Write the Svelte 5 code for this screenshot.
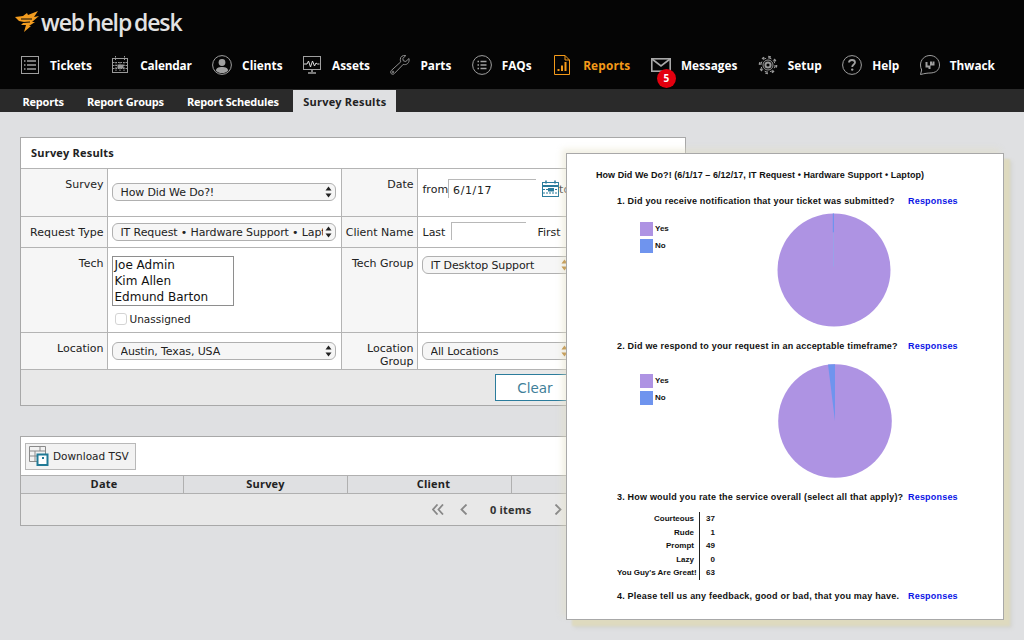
<script lang="ts">
  const subnav = ['Reports', 'Report Groups', 'Report Schedules', 'Survey Results'];
  const ratings = [
    { label: 'Courteous', value: 37 },
    { label: 'Rude', value: 1 },
    { label: 'Prompt', value: 49 },
    { label: 'Lazy', value: 0 },
    { label: "You Guy's Are Great!", value: 63 }
  ];
  const columns = ['Date', 'Survey', 'Client', ''];
</script>

{#snippet arrows(color = '#222')}
  <svg class="arrows" width="7" height="12" viewBox="0 0 7 12">
    <path d="M3.5 0.5 L6.5 4.5 H0.5 Z M3.5 11.5 L0.5 7.5 H6.5 Z" fill={color} />
  </svg>
{/snippet}

{#snippet legend()}
  <div class="legend">
    <div class="key"><i class="swatch yes"></i>Yes</div>
    <div class="key"><i class="swatch no"></i>No</div>
  </div>
{/snippet}

<header class="top">
  <div class="brand">
    <svg width="25" height="22" viewBox="0 0 25 22">
      <path d="M0 6 L8 5 L12 2 L13 4 L23 0 L19 6 L24 5 L17 11 L20 11 L14 15 L16 15 L9 21 L11 14 L6 14 L9 11 L4 10 Z" fill="#f39c1f" />
      <path d="M6 8 L17 8 M8 11.5 L15 11" stroke="#0a0a0a" stroke-width="1" />
    </svg>
    <span class="wordmark">web help desk</span>
  </div>
  <nav class="main">
    <a href="#t" class="item wide-gap">
      <svg width="18" height="18" viewBox="0 0 18 18" fill="none" stroke="#a0a0a0"><rect x="0.5" y="0.5" width="17" height="17" /><path d="M3 5h1.5M6 5h9M3 9h1.5M6 9h9M3 13h1.5M6 13h9" stroke-width="1.6" /></svg>
      Tickets
    </a>
    <a href="#c" class="item cal">
      <svg width="16" height="17" viewBox="0 0 16 17" fill="none" stroke="#999"><rect x="0.5" y="2.5" width="15" height="14" /><path d="M3.5 0v4M12.5 0v4M1 6.5h14M1 9.5h14M1 12.5h14M4 6v10M8 6v10M12 6v10" stroke-dasharray="1.5 1" /><rect x="6" y="9" width="5" height="3" fill="#999" /></svg>
      Calendar
    </a>
    <a href="#l" class="item">
      <svg width="20" height="20" viewBox="0 0 20 20" fill="none" stroke="#a0a0a0"><circle cx="10" cy="10" r="9.4" /><circle cx="10" cy="7.5" r="3.4" fill="#a0a0a0" stroke="none" /><path d="M3.8 15.5 C4.5 12.5 7 12 10 12 C13 12 15.5 12.5 16.2 15.5 C14.5 17.5 12.5 18 10 18 C7.5 18 5.5 17.5 3.8 15.5Z" fill="#a0a0a0" stroke="none" /></svg>
      Clients
    </a>
    <a href="#a" class="item wide-gap">
      <svg width="18" height="18" viewBox="0 0 18 18" fill="none" stroke="#a0a0a0"><rect x="0.5" y="0.5" width="17" height="13" /><path d="M1 8h3l1.5-3 2 6 2-6 2 5 1.5-3 1.5 1h2" stroke="#ddd" /><path d="M9 14v2M5 17h8" stroke-width="1.6" /></svg>
      Assets
    </a>
    <a href="#p" class="item">
      <svg width="20" height="20" viewBox="0 0 20 20" fill="none" stroke="#8f8f8f"><path d="M19 3.5 L15.8 6.5 L13.3 5.8 L12.8 3.4 L15.8 0.6 C12.8 0 10.3 1.5 10.3 4.5 C10.3 5.5 10.5 6.2 10.8 6.8 L1.3 15.5 C0.3 16.5 0.5 17.8 1.2 18.6 C2 19.4 3.3 19.6 4.3 18.6 L13.2 9.4 C16.5 10.4 19.8 8 19 3.5Z" /><circle cx="2.9" cy="17" r="0.9" /></svg>
      Parts
    </a>
    <a href="#f" class="item">
      <svg width="20" height="20" viewBox="0 0 20 20" fill="none" stroke="#a0a0a0"><circle cx="10" cy="10" r="9.4" /><path d="M5.5 6.5h1.5M8.5 6.5h6M5.5 10h1.5M8.5 10h6M5.5 13.5h1.5M8.5 13.5h6" stroke-width="1.7" /></svg>
      FAQs
    </a>
    <a href="#r" class="item current">
      <svg width="16" height="20" viewBox="0 0 16 20" fill="none" stroke="#f49a1a"><path d="M0.5 0.5 H11 L15.5 5 V19.5 H0.5 Z" /><path d="M11 0.5 V5 H15.5" /><path d="M4.5 16V14M8 16V10.5M11.5 16V7" stroke-width="2" /></svg>
      Reports
    </a>
    <a href="#m" class="item msg">
      <svg width="20" height="14" viewBox="0 0 20 14" fill="none" stroke="#a8a8a8" stroke-width="1.6"><rect x="0.8" y="0.8" width="18.4" height="12.4" /><path d="M1 1 L10 8 L19 1" /></svg>
      Messages
      <span class="badge">5</span>
    </a>
    <a href="#s" class="item">
      <svg width="20" height="20" viewBox="0 0 20 20" fill="none" stroke="#9a9a9a"><circle cx="10" cy="10" r="7" stroke-width="1" stroke-dasharray="3.4 2.1" /><circle cx="10" cy="10" r="8.4" stroke-width="1.8" stroke-dasharray="2.6 3.99" /><circle cx="10" cy="10" r="5" /><circle cx="10" cy="10" r="2.6" stroke-width="2" /></svg>
      Setup
    </a>
    <a href="#h" class="item">
      <svg width="20" height="20" viewBox="0 0 20 20" fill="none" stroke="#a0a0a0"><circle cx="10" cy="10" r="9.4" /><path d="M7 7.6 C7 5.8 8.4 5 10 5 C11.7 5 13 6 13 7.5 C13 9.5 10.2 9.5 10.2 12" stroke-width="1.8" /><circle cx="10.2" cy="14.6" r="1.2" fill="#a0a0a0" stroke="none" /></svg>
      Help
    </a>
    <a href="#w" class="item">
      <svg width="20" height="20" viewBox="0 0 20 20" fill="none" stroke="#a0a0a0"><path d="M1.7 15 C0.9 13.6 0.5 11.8 0.5 10 C0.5 4.7 4.7 0.5 10 0.5 C15.3 0.5 19.5 4.7 19.5 10 C19.5 15.3 15.3 18 10 18 C7.6 18 5 18.4 0.5 19.5 Z" /><path d="M6.5 7v4.5h3v2.5M11 6.5v3h2.5v-3" stroke-width="2" /></svg>
      Thwack
    </a>
  </nav>
  <nav class="sub">
    {#each subnav as tab, i}
      <a href="#x" class:active={i === subnav.length - 1}>{tab}</a>
    {/each}
  </nav>
</header>

<main class="content">
  <section class="panel form">
    <h2>Survey Results</h2>
    <table>
      <colgroup>
        <col class="c1" /><col class="c2" /><col class="c3" /><col />
      </colgroup>
      <tbody>
        <tr class="r1">
          <th>Survey</th>
          <td>
            <div class="select"><select><option>How Did We Do?!</option></select>{@render arrows()}</div>
          </td>
          <th>Date</th>
          <td>
            <div class="dates">
              <span>from</span><input class="date" value="6/1/17" />
              <svg width="17" height="17" viewBox="0 0 17 17" fill="none" stroke="#2b7c9c"><rect x="0.5" y="2.5" width="16" height="14" /><path d="M4 0.5v3M13 0.5v3" stroke-width="1.5" /><path d="M1 6h15" stroke-width="2" /><path d="M1 9.5h15M1 13h15" stroke-dasharray="2 1" /><rect x="6" y="8" width="6" height="3.5" fill="#2b7c9c" stroke="none" /></svg>
              <span class="to">to</span>
            </div>
          </td>
        </tr>
        <tr class="r2">
          <th>Request Type</th>
          <td>
            <div class="select"><select><option>IT Request • Hardware Support • Laptop</option></select>{@render arrows()}</div>
          </td>
          <th>Client Name</th>
          <td>
            <div class="names">
              <span>Last</span><input class="name" />
              <span>First</span>
            </div>
          </td>
        </tr>
        <tr class="r3">
          <th>Tech</th>
          <td>
            <div class="techs">
              <div>Joe Admin</div>
              <div>Kim Allen</div>
              <div>Edmund Barton</div>
            </div>
            <label class="check"><input type="checkbox" />Unassigned</label>
          </td>
          <th>Tech Group</th>
          <td>
            <div class="select wide"><select><option>IT Desktop Support</option></select>{@render arrows('#b8802a')}</div>
          </td>
        </tr>
        <tr class="r4">
          <th>Location</th>
          <td>
            <div class="select"><select><option>Austin, Texas, USA</option></select>{@render arrows()}</div>
          </td>
          <th>Location Group</th>
          <td>
            <div class="select wide"><select><option>All Locations</option></select>{@render arrows('#b8802a')}</div>
          </td>
        </tr>
      </tbody>
    </table>
    <div class="actions">
      <button type="button" class="clear">Clear</button>
    </div>
  </section>

  <section class="panel results">
    <div class="toolbar">
      <button type="button" class="download">
        <svg width="20" height="20" viewBox="0 0 20 20" fill="none">
          <path d="M0.5 0.5H16.5V15.5H0.5ZM0.5 5H16.5M0.5 10H16.5M6 5V15.5M11 0.5V5" stroke="#8a8a8a" />
          <rect x="8.5" y="8.5" width="10" height="10.5" fill="#fff" stroke="#217a96" stroke-width="2" />
          <rect x="13" y="11" width="2" height="2" fill="#217a96" />
        </svg>
        Download TSV
      </button>
    </div>
    <div class="head">
      {#each columns as col}
        <div>{col}</div>
      {/each}
    </div>
    <div class="pager">
      <svg width="12" height="11" viewBox="0 0 12 11" fill="none" stroke="#888" stroke-width="1.8"><path d="M5.5 0.5 L1 5.5 L5.5 10.5M11 0.5 L6.5 5.5 L11 10.5" /></svg>
      <svg class="prev" width="8" height="11" viewBox="0 0 8 11" fill="none" stroke="#888" stroke-width="1.8"><path d="M6.5 0.5 L1.5 5.5 L6.5 10.5" /></svg>
      <span>0 items</span>
      <svg class="next" width="8" height="11" viewBox="0 0 8 11" fill="none" stroke="#888" stroke-width="1.8"><path d="M1.5 0.5 L6.5 5.5 L1.5 10.5" /></svg>
    </div>
  </section>
</main>

<aside class="report">
  <h3>How Did We Do?! (6/1/17 – 6/12/17, IT Request • Hardware Support • Laptop)</h3>

  <div class="question q1">
    <span class="ask">1. Did you receive notification that your ticket was submitted?</span>
    <a href="#q1">Responses</a>
  </div>
  <div class="chart c-one">
    {@render legend()}
    <svg class="pie" width="114" height="114" viewBox="0 0 114 114">
      <circle cx="57" cy="57" r="56.5" fill="#ae93e3" />
      <path d="M55.8 0.5h1.2v19h-1.2z" fill="#6f94ee" />
      <path d="M56.1 19.5h0.9v34h-0.9z" fill="#98a4e8" />
    </svg>
  </div>

  <div class="question q2">
    <span class="ask">2. Did we respond to your request in an acceptable timeframe?</span>
    <a href="#q2">Responses</a>
  </div>
  <div class="chart c-two">
    {@render legend()}
    <svg class="pie" width="114" height="114" viewBox="0 0 114 114">
      <circle cx="57" cy="57" r="56.8" fill="#ae93e3" />
      <path d="M57 57 L50 0.6 A57 57 0 0 1 57 0.2 Z" fill="#6f94ee" />
    </svg>
  </div>

  <div class="question q3">
    <span class="ask">3. How would you rate the service overall (select all that apply)?</span>
    <a href="#q3">Responses</a>
  </div>
  <div class="ratings">
    {#each ratings as row}
      <div class="rating-label">{row.label}</div>
      <div class="rating-value">{row.value}</div>
    {/each}
  </div>

  <div class="question q4">
    <span class="ask">4. Please tell us any feedback, good or bad, that you may have.</span>
    <a href="#q4">Responses</a>
  </div>
</aside>

<style>
  :global(body) {
    margin: 0;
    background: #dfe0e2;
    font-family: "DejaVu Sans", sans-serif;
    overflow: hidden;
  }

  .top {
    background: #050505;
  }

  .brand {
    height: 45px;
    padding-left: 15px;
    display: flex;
    align-items: center;
    gap: 1px;
    box-sizing: border-box;
  }

  .brand svg {
    margin-top: -1px;
  }

  .wordmark {
    color: #e2e2e2;
    font-family: "Open Sans", sans-serif;
    font-size: 23px;
    font-weight: 600;
    letter-spacing: -1.1px;
    word-spacing: -2px;
    margin-top: -2px;
  }

  .main {
    height: 44px;
    padding: 0 0 5px 21px;
    display: flex;
    align-items: center;
    gap: 20.5px;
    box-sizing: border-box;
  }

  .item {
    position: relative;
    display: flex;
    align-items: center;
    gap: 10px;
    color: #fff;
    font-family: "Open Sans", sans-serif;
    font-size: 11.8px;
    font-weight: 700;
    text-decoration: none;
    white-space: nowrap;
  }

  .item.wide-gap {
    gap: 11px;
  }

  .item.cal {
    gap: 12px;
    letter-spacing: -0.2px;
  }

  .item.current {
    color: #f49a1a;
    gap: 13px;
    margin-left: 2px;
    letter-spacing: 0.2px;
  }

  .badge {
    position: absolute;
    left: 6px;
    top: 12px;
    width: 19px;
    height: 19px;
    border-radius: 50%;
    background: #e3000f;
    color: #fff;
    font-size: 10px;
    line-height: 19px;
    text-align: center;
  }

  .sub {
    height: 23px;
    background: #2a2a2a;
    display: flex;
    align-items: flex-end;
    padding-left: 11px;
  }

  .sub a {
    height: 22px;
    line-height: 24px;
    padding: 0 11.5px;
    color: #fff;
    font-family: "Open Sans", sans-serif;
    font-size: 11px;
    font-weight: 700;
    letter-spacing: -0.2px;
    text-decoration: none;
  }

  .sub a.active {
    background: #dfe0e2;
    color: #222;
    letter-spacing: 0.2px;
    padding: 0 10px;
    margin-left: 3px;
  }

  .content {
    padding: 25px 0 0 20px;
    width: 666px;
  }

  .panel {
    border: 1px solid #a8a8a8;
    background: #fff;
  }

  h2 {
    margin: 0;
    height: 30px;
    padding-left: 10px;
    font-family: "Open Sans", sans-serif;
    font-size: 11px;
    line-height: 30px;
    color: #222;
    letter-spacing: 0.2px;
  }

  table {
    width: 100%;
    table-layout: fixed;
    border-collapse: collapse;
    font-size: 11px;
    color: #222;
  }

  .c1 { width: 86px; }
  .c2 { width: 234px; }
  .c3 { width: 76px; }

  th, td {
    border: 1px solid #b4b4b4;
    vertical-align: top;
    padding: 0;
  }

  tr > :first-child { border-left: 0; }
  tr > :last-child { border-right: 0; }

  th {
    background: #f6f6f6;
    font-weight: 400;
    text-align: right;
    padding: 9px 3px 0 0;
    line-height: 13px;
  }

  td {
    padding: 9px 4px 0 4px;
    white-space: nowrap;
  }

  .r1 { height: 48px; }
  .r2 { height: 31px; }
  .r3 { height: 85px; }
  .r4 { height: 37px; }

  .r2 td { padding-top: 5px; }
  .r1 td { padding-top: 14px; }
  .r3 td { padding-top: 8px; }

  .r2 .select {
    margin-top: 1px;
  }

  .select {
    position: relative;
    width: 224px;
    height: 18px;
  }

  .select.wide {
    width: 260px;
  }

  .select select {
    width: 100%;
    height: 18px;
    appearance: none;
    border: 1px solid #b0b0b0;
    border-radius: 6px;
    background: #f6f6f6;
    padding: 0 12px 0 8px;
    font: 11px "DejaVu Sans", sans-serif;
    letter-spacing: -0.12px;
    color: #222;
    box-sizing: border-box;
    outline: none;
  }

  .arrows {
    position: absolute;
    right: 4px;
    top: 3px;
  }

  .select.wide .arrows {
    right: 114px;
  }

  .dates, .names {
    display: flex;
    align-items: flex-start;
    margin-left: 1px;
  }

  .dates {
    margin-top: -4px;
  }

  .dates span {
    line-height: 14px;
    margin-top: 4px;
  }

  .date, .name {
    border: 0;
    border-top: 1px solid #b8b8b8;
    border-left: 1px solid #b8b8b8;
    background: transparent;
    padding: 2px 0 0 4px;
    font: 11px "DejaVu Sans", sans-serif;
    letter-spacing: 0.6px;
    color: #222;
    box-sizing: border-box;
    outline: none;
  }

  .date {
    width: 88px;
    height: 19px;
    margin: 0 6px 0 0;
  }

  .dates svg {
    flex: none;
    margin-top: 1px;
  }

  .to {
    color: #444;
  }

  .names span {
    margin-top: 4px;
    line-height: 14px;
  }

  .name {
    width: 75px;
    height: 18px;
    margin: 0 11px 0 6px;
  }

  .techs {
    width: 122px;
    height: 50px;
    border: 1px solid #8e8e8e;
    padding: 0 0 0 2px;
    box-sizing: border-box;
    font-size: 12px;
    line-height: 16px;
    color: #111;
    background: #fff;
  }

  .check {
    display: flex;
    align-items: center;
    gap: 3px;
    margin: 6px 0 0 3px;
    font-size: 10.5px;
    line-height: 14px;
  }

  .check input {
    appearance: none;
    width: 12px;
    height: 12px;
    margin: 0;
    border: 1px solid #d4d4d4;
    border-radius: 3px;
    background: #fff;
  }

  .actions {
    height: 35px;
    background: #e8e8e8;
    display: flex;
    justify-content: flex-end;
    align-items: center;
    padding-right: 110px;
  }

  .clear {
    width: 80px;
    height: 27px;
    border: 1px solid #2b7c9c;
    background: #fff;
    color: #3f7f99;
    font: 13.5px "DejaVu Sans", sans-serif;
    padding: 0;
  }

  .results {
    margin-top: 30px;
  }

  .toolbar {
    height: 38px;
    display: flex;
    align-items: center;
    padding-left: 4px;
  }

  .download {
    width: 111px;
    height: 27px;
    display: flex;
    align-items: center;
    gap: 4px;
    padding: 0 0 0 3px;
    border: 1px solid #b8b8b8;
    background: #f2f2f2;
    font: 10.5px "DejaVu Sans", sans-serif;
    color: #222;
    box-sizing: border-box;
  }

  .head {
    display: grid;
    grid-template-columns: 163px 164px 164px 1fr;
    height: 17px;
    background: #dfe0e2;
    border-top: 1px solid #b0b0b0;
    border-bottom: 1px solid #b0b0b0;
    font-family: "Open Sans", sans-serif;
    font-size: 11px;
    font-weight: 700;
    letter-spacing: 0.2px;
    line-height: 16px;
    color: #222;
    text-align: center;
  }

  .head div {
    border-right: 1px solid #b0b0b0;
  }

  .head div:nth-child(1) { padding-left: 4px; }
  .head div:nth-child(3) { padding-left: 8px; }

  .pager {
    height: 31px;
    background: #e8e8e8;
    display: flex;
    align-items: center;
    padding-left: 411px;
    color: #333;
  }

  .prev {
    margin-left: 16px;
  }

  .pager span {
    margin-left: 22px;
    width: 42px;
    font-family: "Open Sans", sans-serif;
    font-size: 11px;
    font-weight: 700;
    letter-spacing: 0.2px;
    white-space: nowrap;
  }

  .next {
    margin-left: 22px;
  }

  .report {
    position: absolute;
    left: 566px;
    top: 153px;
    width: 438px;
    height: 467px;
    box-sizing: border-box;
    border: 1px solid #a8a8a8;
    background: #fff;
    box-shadow: 6px 6px 2px #dedabf, 8px 8px 4px #d4d4d0, -4px -4px 6px rgba(226, 222, 196, 0.45);
    padding: 16px 0 0 29px;
    font-family: "Liberation Sans", sans-serif;
    color: #111;
  }

  h3 {
    margin: 0;
    font-size: 9px;
    font-weight: 700;
    line-height: 11px;
    letter-spacing: 0.06px;
  }

  .question {
    display: flex;
    padding-left: 21px;
    font-size: 9px;
    font-weight: 700;
    line-height: 12px;
    letter-spacing: 0.2px;
  }

  .question a {
    color: #0a14e6;
    text-decoration: none;
    position: absolute;
    left: 341px;
  }

  .q1 { margin-top: 14px; }
  .q2 { margin-top: 13px; }
  .q3 { margin-top: 13px; }
  .q4 { margin-top: 10px; }

  .chart {
    display: flex;
  }

  .c-one { height: 114px; padding-top: 6px; }
  .c-two { height: 114px; padding-top: 12px; }

  .legend {
    width: 181px;
    padding: 7px 0 0 44px;
    box-sizing: border-box;
    font-size: 8px;
    font-weight: 700;
  }

  .c-two .legend {
    padding-top: 8px;
  }

  .key {
    display: flex;
    align-items: center;
    gap: 2px;
    height: 17px;
  }

  .swatch {
    display: block;
    width: 13px;
    height: 14px;
  }

  .swatch.yes { background: #ae93e3; }
  .swatch.no { background: #6f94ee; }

  .pie {
    flex: none;
  }

  .c-two .pie {
    margin-left: 1px;
  }

  .ratings {
    display: grid;
    grid-template-columns: 83px 20px;
    margin: 9px 0 0 21px;
    font-size: 8px;
    font-weight: 700;
    line-height: 13.5px;
    width: max-content;
  }

  .rating-label {
    text-align: right;
    padding-right: 5px;
    border-right: 1px solid #222;
    white-space: nowrap;
  }

  .rating-value {
    text-align: right;
    padding-right: 5px;
  }
</style>
